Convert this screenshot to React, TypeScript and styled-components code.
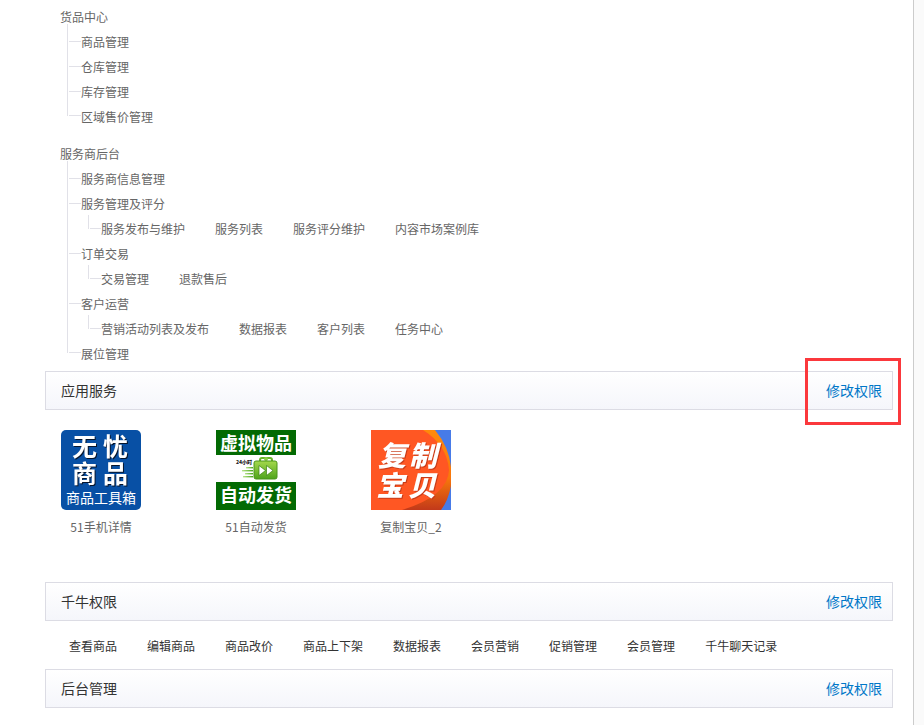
import React from 'react';
import styled, { createGlobalStyle } from 'styled-components';

const GlobalStyle = createGlobalStyle`
  * { box-sizing: border-box; }
  body {
    margin: 0;
    background: #fafafa;
    color: #666;
    font-family: "Noto Sans CJK SC", "Liberation Sans", sans-serif;
    font-size: 12px;
    line-height: 25px;
  }
  ul { margin: 0; padding: 0; list-style: none; }
`;

const LINE = '#e1e1e8';

const Page = styled.main`
  min-height: 100vh;
  margin-right: 10px;
  padding: 4px 20px 17px 45px;
  border-right: 1px solid #ccc;
  background: #fff;
`;

const Trees = styled.div`
  display: flex;
  flex-direction: column;
  gap: 12px;
  padding: 0 15px 5px;
`;

const Branch = styled.ul`
  padding-left: 21px;
`;

const Node = styled.li`
  position: relative;

  &::before {
    content: '';
    position: absolute;
    top: -5px;
    bottom: 0;
    left: -14px;
    border-left: 1px solid ${LINE};
  }

  &::after {
    content: '';
    position: absolute;
    top: 12px;
    left: -12px;
    width: 12px;
    border-top: 1px solid ${LINE};
  }

  &:last-child::before {
    bottom: auto;
    height: 17px;
  }

  &:last-child::after {
    top: 11px;
  }
`;

const Leaves = styled.ul`
  position: relative;
  display: flex;
  flex-wrap: wrap;
  column-gap: 30px;
  padding-left: 20px;

  &::before {
    content: '';
    position: absolute;
    top: -1px;
    left: 7px;
    height: 14px;
    border-left: 1px solid ${LINE};
  }

  &::after {
    content: '';
    position: absolute;
    top: 12px;
    left: 9px;
    width: 11px;
    border-top: 1px solid ${LINE};
  }
`;

const Bar = styled.header`
  position: relative;
  display: flex;
  align-items: center;
  justify-content: space-between;
  height: 39px;
  padding: 0 10px 0 15px;
  border: 1px solid #dcdce4;
  background: linear-gradient(#fff, #f5f6fb);
`;

const Title = styled.h2`
  margin: 0;
  color: #333;
  font-size: 14px;
  font-weight: 400;
`;

const EditLink = styled.a`
  color: #0077c8;
  font-size: 14px;
  text-decoration: none;
`;

const Highlight = styled.span`
  position: absolute;
  top: -14px;
  right: -9px;
  width: 96px;
  height: 67px;
  border: 3px solid #fb383c;
  pointer-events: none;
`;

const Apps = styled.ul`
  display: flex;
  flex-wrap: wrap;
  gap: 75px;
  padding: 20px 16px 43px;
`;

const AppItem = styled.li`
  display: flex;
  flex-direction: column;
  align-items: center;
  gap: 4px;
  width: 80px;
  white-space: nowrap;
`;

const AppIcon = styled.svg`
  display: block;
  width: 80px;
  height: 80px;
  overflow: visible;
  font-family: "Noto Sans CJK SC", sans-serif;
`;

const ShadedLetters = styled.g<{ $shade: string }>`
  fill: #fff;
  filter: drop-shadow(1px 1px 0 ${(p) => p.$shade});
`;

const Permissions = styled.ul`
  display: flex;
  flex-wrap: wrap;
  column-gap: 30px;
  padding: 12px 24px 11px;
  color: #333;
`;

const ToolboxIcon = () => (
  <AppIcon viewBox="0 0 80 80" aria-hidden="true">
    <rect width="80" height="80" rx="5" fill="#0850a5" />
    <ShadedLetters $shade="#06152c" fontSize="25" fontWeight="700">
      <text x="11" y="26">无</text>
      <text x="42" y="26">忧</text>
      <text x="11" y="53">商</text>
      <text x="42" y="53">品</text>
    </ShadedLetters>
    <text x="5" y="73" fontSize="14" fill="#fff">商品工具箱</text>
  </AppIcon>
);

const DeliveryIcon = () => (
  <AppIcon viewBox="0 0 80 80" aria-hidden="true">
    <defs>
      <linearGradient id="case" x1="0" y1="0" x2="0" y2="1">
        <stop offset="0" stopColor="#a4d84c" />
        <stop offset="1" stopColor="#4fa31c" />
      </linearGradient>
      <linearGradient id="speed">
        <stop offset="0" stopColor="#b9e48b" />
        <stop offset="1" stopColor="#4ba51e" />
      </linearGradient>
    </defs>
    <rect width="80" height="80" fill="#fff" />
    <rect width="80" height="25" fill="#036a03" />
    <rect y="52" width="80" height="28" fill="#036a03" />
    <g fontSize="18" fontWeight="700" fill="#fff" textAnchor="middle">
      <text x="40" y="20">虚拟物品</text>
      <text x="40" y="72">自动发货</text>
    </g>
    <text x="20" y="34" fontSize="5" fontWeight="900" fill="#222">24小时</text>
    <g fill="url(#speed)">
      <rect x="30" y="37" width="7" height="1.4" />
      <rect x="26" y="40" width="11" height="1.4" />
      <rect x="29" y="43" width="8" height="1.4" />
      <rect x="27" y="46" width="10" height="1.4" />
    </g>
    <path d="M44 32V30Q44 28 46 28H54Q56 28 56 30V32" fill="none" stroke="#68b528" strokeWidth="2" />
    <circle cx="50" cy="29" r="2" fill="#8aca45" />
    <rect x="38" y="31" width="23" height="18" rx="2" fill="url(#case)" stroke="#4b951b" />
    <path d="M43 35.5L49.5 40.5L43 45.5ZM50.5 35.5L57 40.5L50.5 45.5Z" fill="#fff" stroke="#397f12" strokeWidth="0.7" />
  </AppIcon>
);

const CopyIcon = () => (
  <AppIcon viewBox="0 0 80 80" aria-hidden="true">
    <defs>
      <linearGradient id="edge" x1="0" y1="0" x2="0" y2="1">
        <stop offset="0" stopColor="#ff8a0b" />
        <stop offset="0.6" stopColor="#f8780c" />
        <stop offset="1" stopColor="#c2391a" />
      </linearGradient>
    </defs>
    <rect width="80" height="80" fill="#477be8" />
    <path d="M0 0H64Q78 17 80 37V56Q77 71 70 80H0Z" fill="url(#edge)" />
    <path d="M0 0H52Q76 15 78 40Q77 66 31 80H0Z" fill="#ff5723" />
    <ShadedLetters $shade="#c73b18" fontSize="28" fontWeight="900" fontStyle="italic">
      <text x="7" y="36">复</text>
      <text x="38" y="36">制</text>
      <text x="5" y="66">宝</text>
      <text x="37" y="66">贝</text>
    </ShadedLetters>
  </AppIcon>
);

type BranchData = { name: string; leaves?: string[] };

const trees: { name: string; branches: BranchData[] }[] = [
  {
    name: '货品中心',
    branches: [{ name: '商品管理' }, { name: '仓库管理' }, { name: '库存管理' }, { name: '区域售价管理' }],
  },
  {
    name: '服务商后台',
    branches: [
      { name: '服务商信息管理' },
      { name: '服务管理及评分', leaves: ['服务发布与维护', '服务列表', '服务评分维护', '内容市场案例库'] },
      { name: '订单交易', leaves: ['交易管理', '退款售后'] },
      { name: '客户运营', leaves: ['营销活动列表及发布', '数据报表', '客户列表', '任务中心'] },
      { name: '展位管理' },
    ],
  },
];

const apps = [
  { name: '51手机详情', Icon: ToolboxIcon },
  { name: '51自动发货', Icon: DeliveryIcon },
  { name: '复制宝贝_2', Icon: CopyIcon },
];

const permissions = [
  '查看商品', '编辑商品', '商品改价', '商品上下架', '数据报表', '会员营销', '促销管理', '会员管理', '千牛聊天记录',
];

const SectionBar = ({ title, highlighted = false }: { title: string; highlighted?: boolean }) => (
  <Bar>
    <Title>{title}</Title>
    <EditLink href="#">修改权限</EditLink>
    {highlighted && <Highlight />}
  </Bar>
);

export default function App() {
  return (
    <>
      <GlobalStyle />
      <Page>
        <Trees>
          {trees.map((tree) => (
            <div key={tree.name}>
              {tree.name}
              <Branch>
                {tree.branches.map((branch) => (
                  <Node key={branch.name}>
                    {branch.name}
                    {branch.leaves && (
                      <Leaves>
                        {branch.leaves.map((leaf) => <li key={leaf}>{leaf}</li>)}
                      </Leaves>
                    )}
                  </Node>
                ))}
              </Branch>
            </div>
          ))}
        </Trees>
        <section>
          <SectionBar title="应用服务" highlighted />
          <Apps>
            {apps.map(({ name, Icon }) => (
              <AppItem key={name}>
                <Icon />
                {name}
              </AppItem>
            ))}
          </Apps>
        </section>
        <section>
          <SectionBar title="千牛权限" />
          <Permissions>
            {permissions.map((name) => <li key={name}>{name}</li>)}
          </Permissions>
        </section>
        <section>
          <SectionBar title="后台管理" />
        </section>
      </Page>
    </>
  );
}
